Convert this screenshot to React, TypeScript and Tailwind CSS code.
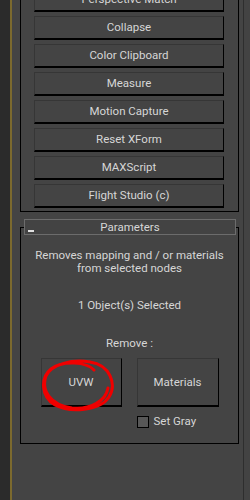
import React from 'react';

const utilities = [
    'Perspective Match',
    'Collapse',
    'Color Clipboard',
    'Measure',
    'Motion Capture',
    'Reset XForm',
    'MAXScript',
    'Flight Studio (c)',
];

function MaxButton({ label, className, children }: { label: string; className: string; children?: React.ReactNode }) {
    return (
        <div
            className={`relative flex items-center justify-center bg-[#444444] border border-[#363636] border-r-black border-b-2 border-b-black text-[#d6d6d6] ${className}`}
        >
            {label}
            {children}
        </div>
    );
}

function RedCircle() {
    // hand drawn marker loop around the UVW button
    return (
        <svg
            className="absolute left-[-5px] top-[-3px] pointer-events-none"
            width="80"
            height="60"
            viewBox="36 358 80 60"
            fill="none"
        >
            <path
                d="M93 372 C86 364 62 362 50 371 C39 380 40 399 54 407 C69 415 99 413 108 399 C116 386 109 367 89 364 C71 361 51 366 45 378 C40 392 49 407 71 410 C89 412 105 403 107 390"
                stroke="#f00000"
                strokeWidth="3"
                strokeLinecap="round"
            />
        </svg>
    );
}

export default function App() {
    return (
        <div className="w-[250px] h-[500px] flex overflow-hidden bg-[#444444] text-[11.5px] leading-[13px] font-['Roboto',sans-serif]">
            <div className="w-[10px] bg-[#2b2b2b]" />
            <div className="w-[2px] bg-[#7c6a2e]" />
            <div className="w-[231px] pl-[8px] pr-[4px] flex flex-col">
                {/* Utilities rollout, scrolled so its top is out of view */}
                <div className="w-[219px] border-l border-r border-b border-black px-[13px] pb-[3px] -mt-[12px] flex flex-col gap-[4px]">
                    {utilities.map(u => (
                        <MaxButton key={u} label={u} className="w-[190px] h-[24px]" />
                    ))}
                </div>

                {/* Parameters rollout */}
                <div className="w-[219px] mt-[15px] border border-black flex flex-col items-center pb-[15px]">
                    <div className="-mt-[9px] ml-[3px] mr-[2px] self-stretch h-[16px] border border-[#6c6c6c] bg-[#434343] relative flex items-center justify-center text-[#d6d6d6]">
                        <span className="absolute left-[3px] top-[10px] w-[6px] h-[2px] bg-[#e0e0e0]" />
                        Parameters
                    </div>
                    <div className="mt-[14px] text-center text-[#d6d6d6]">
                        Removes mapping and / or materials
                        <br />
                        from selected nodes
                    </div>
                    <div className="mt-[24px] text-[#d6d6d6]">1 Object(s) Selected</div>
                    <div className="mt-[25px] text-[#d6d6d6]">Remove :</div>
                    <div className="mt-[8px] flex gap-[15px]">
                        <MaxButton label="UVW" className="w-[81px] h-[49px]">
                            <RedCircle />
                        </MaxButton>
                        <MaxButton label="Materials" className="w-[82px] h-[49px]" />
                    </div>
                    <div className="mt-[8px] flex items-center gap-[5px] w-[178px] pl-[96px]">
                        <div className="w-[12px] h-[12px] border border-black bg-[#575757] shrink-0" />
                        <span className="text-[#d6d6d6] whitespace-nowrap">Set Gray</span>
                    </div>
                </div>
            </div>
            <div className="w-px bg-[#2e2e2e]" />
            <div className="flex-1 bg-[#434343]" />
        </div>
    );
}
